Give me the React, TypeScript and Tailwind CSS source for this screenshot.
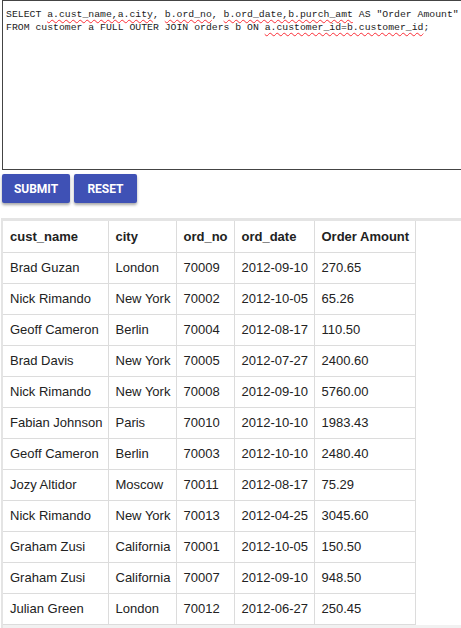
import React from 'react';

const rows = [
  ['Brad Guzan', 'London', '70009', '2012-09-10', '270.65'],
  ['Nick Rimando', 'New York', '70002', '2012-10-05', '65.26'],
  ['Geoff Cameron', 'Berlin', '70004', '2012-08-17', '110.50'],
  ['Brad Davis', 'New York', '70005', '2012-07-27', '2400.60'],
  ['Nick Rimando', 'New York', '70008', '2012-09-10', '5760.00'],
  ['Fabian Johnson', 'Paris', '70010', '2012-10-10', '1983.43'],
  ['Geoff Cameron', 'Berlin', '70003', '2012-10-10', '2480.40'],
  ['Jozy Altidor', 'Moscow', '70011', '2012-08-17', '75.29'],
  ['Nick Rimando', 'New York', '70013', '2012-04-25', '3045.60'],
  ['Graham Zusi', 'California', '70001', '2012-10-05', '150.50'],
  ['Graham Zusi', 'California', '70007', '2012-09-10', '948.50'],
  ['Julian Green', 'London', '70012', '2012-06-27', '250.45'],
];

const headers = ['cust_name', 'city', 'ord_no', 'ord_date', 'Order Amount'];
const widths = ['w-[105px]', 'w-[68px]', 'w-[58px]', 'w-[80px]', 'w-[101px]'];

const Sp = ({ children }: { children: React.ReactNode }) => (
  <span className="underline decoration-wavy decoration-red-500 decoration-1 underline-offset-2">{children}</span>
);

export default function App() {
  return (
    <div className="w-[461px] h-[628px] overflow-hidden bg-white font-['Liberation_Sans',Arial,sans-serif]">
      {/* Query editor */}
      <div className="ml-[2px] w-[480px] h-[170px] border border-[#444] pl-[3px] pt-[7px] font-['Liberation_Mono',monospace] text-[9.8px] leading-[13px] text-[#222] whitespace-pre">
        <div>
          SELECT <Sp>a.cust_name,a.city</Sp>, <Sp>b.ord_no</Sp>, <Sp>b.ord_date,b.purch_amt</Sp> AS "Order Amount"
        </div>
        <div>
          FROM customer a FULL OUTER JOIN orders b ON <Sp>a.customer_id=b.customer_id</Sp>;
        </div>
      </div>

      {/* Buttons */}
      <div className="flex gap-[4px] ml-[2px] mt-[4px]">
        <button className="w-[68px] h-[29px] bg-[#3f51b5] text-white text-[12px] font-bold rounded-[2px] shadow-[0_2px_3px_rgba(0,0,0,0.35)] font-['Roboto',Arial,sans-serif]">
          SUBMIT
        </button>
        <button className="w-[63px] h-[29px] bg-[#3f51b5] text-white text-[12px] font-bold rounded-[2px] shadow-[0_2px_3px_rgba(0,0,0,0.35)] font-['Roboto',Arial,sans-serif]">
          RESET
        </button>
      </div>

      {/* Results */}
      <div className="ml-[1px] mt-[15px] w-[480px] border-t-[3px] border-l-[2px] border-[#e4e4e4] bg-white">
        <table className="table-fixed w-[412px] border-collapse bg-white text-[13px] text-[#222]">
          <thead>
            <tr className="h-[31px]">
              {headers.map((h, i) => (
                <th key={h} className={`${widths[i]} border border-[#dcdcdc] border-t-0 border-l-0 pl-[7px] pr-0 text-left font-bold whitespace-nowrap`}>
                  {h}
                </th>
              ))}
            </tr>
          </thead>
          <tbody>
            {rows.map((r, ri) => (
              <tr key={ri} className="h-[31px]">
                {r.map((c, ci) => (
                  <td key={ci} className={`${widths[ci]} border border-[#dcdcdc] border-l-0 pl-[7px] pr-0 text-left font-normal whitespace-nowrap`}>
                    {c}
                  </td>
                ))}
              </tr>
            ))}
          </tbody>
        </table>
        <div className="h-[12px] bg-[#f1f1f1]" />
      </div>
    </div>
  );
}
